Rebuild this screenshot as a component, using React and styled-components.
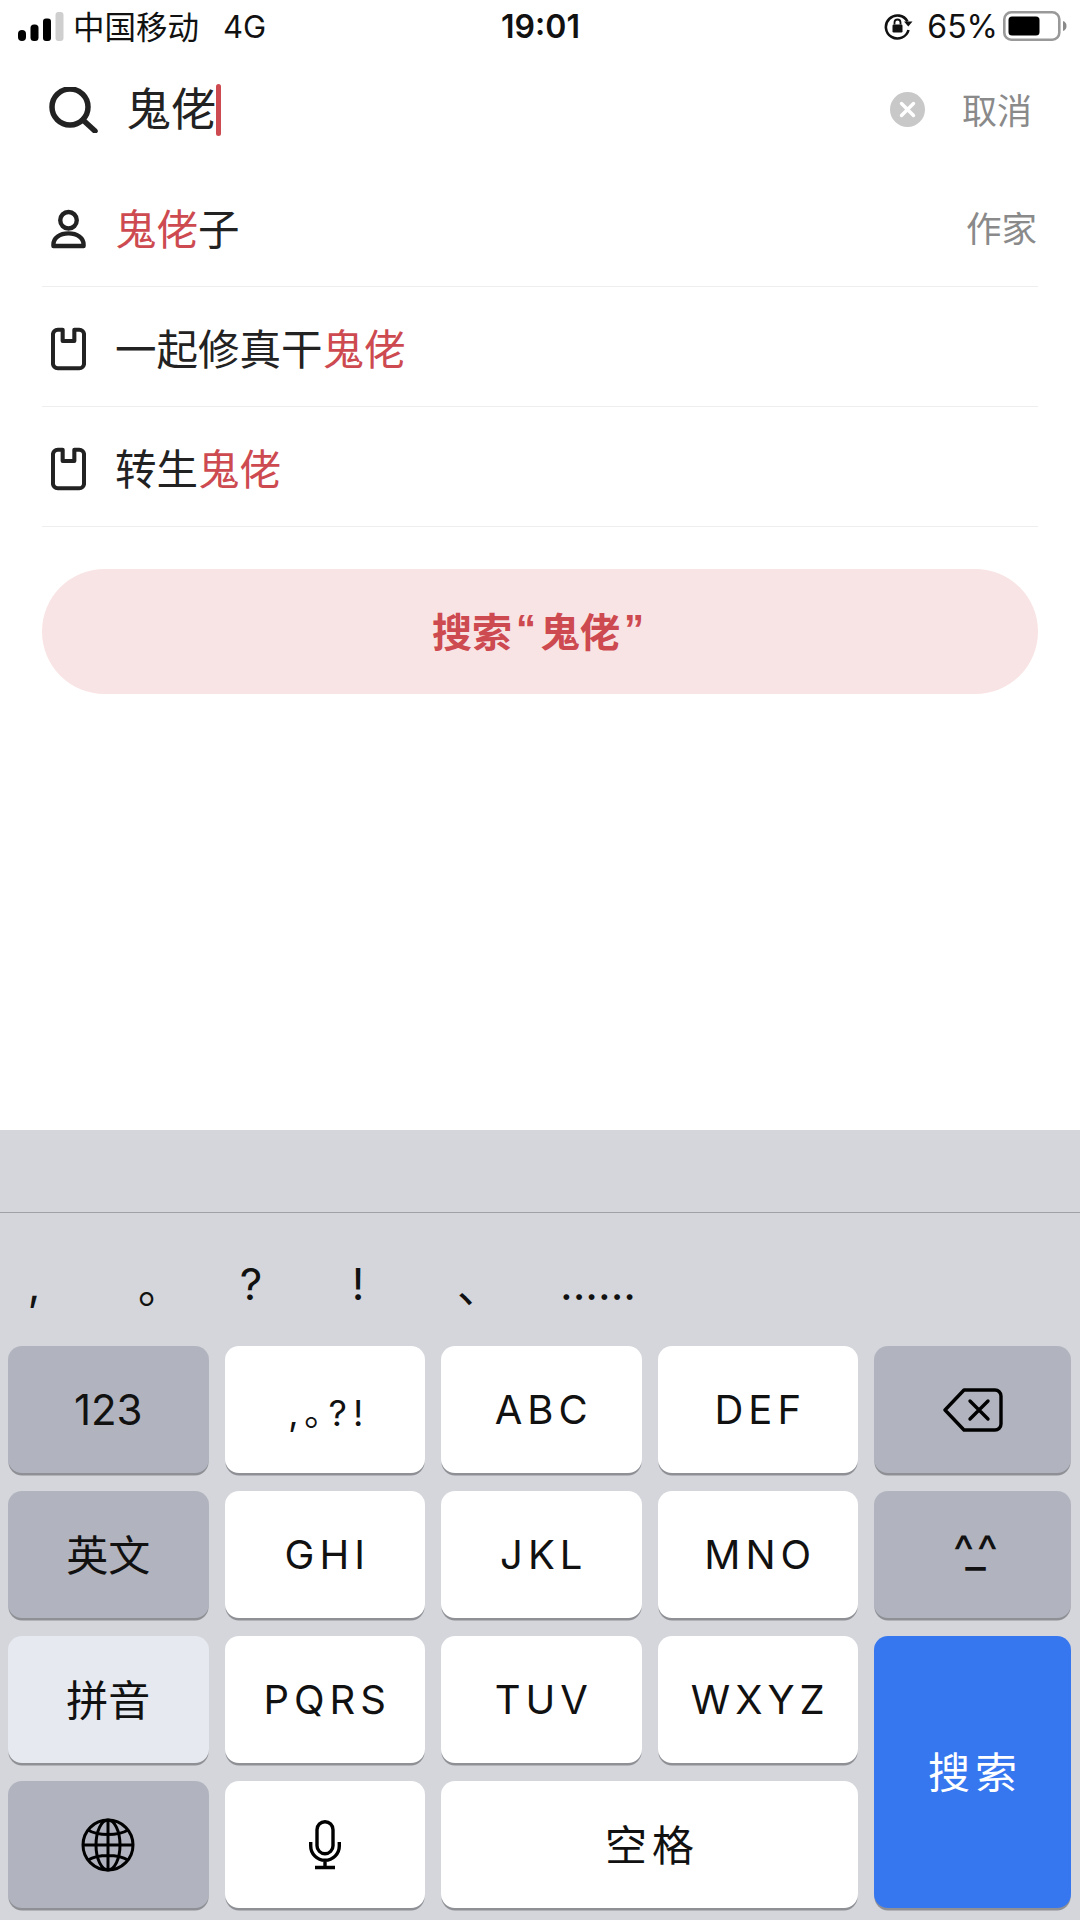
import React from 'react';
import styled, { createGlobalStyle } from 'styled-components';

const RED = '#cd4a50';
const INK = '#222222';

const GlobalStyle = createGlobalStyle`
  html, body {
    margin: 0;
    padding: 0;
    background: #ffffff;
  }
  body {
    font-family: Inter, "Noto Sans CJK SC", sans-serif;
    color: ${INK};
  }
`;

const Screen = styled.div`
  width: 1080px;
  height: 1920px;
  display: flex;
  flex-direction: column;
  overflow: hidden;
`;

const StatusBar = styled.div`
  height: 52px;
  padding: 0 13px 0 18px;
  display: grid;
  grid-template-columns: 1fr auto 1fr;
  align-items: center;
  color: #111111;
  font-size: 30px;
`;

const StatusLeft = styled.div`
  display: flex;
  align-items: center;
`;

const StatusRight = styled.div`
  display: flex;
  align-items: center;
  justify-content: flex-end;
`;

const Carrier = styled.span`
  margin: -3px 0 0 9px;
  font-size: 31.500px;
`;

const Network = styled.span`
  margin-left: 24px;
  font-size: 31px;
`;

const Clock = styled.span`
  margin-left: -4px;
  font-size: 32px;
  font-weight: 600;
`;

const Percent = styled.span`
  margin: 0 5px 0 14px;
  font-size: 32px;
`;

const SearchRow = styled.div`
  height: 115px;
  padding: 0 48px 0 49px;
  display: flex;
  align-items: center;
`;

const Query = styled.div`
  margin-left: 28px;
  font-size: 45px;
  line-height: 52px;
  display: flex;
  align-items: center;
`;

const Caret = styled.span`
  width: 5px;
  height: 52px;
  border-radius: 3px;
  background: ${RED};
`;

const ClearButton = styled.span`
  margin-left: auto;
  width: 35px;
  height: 35px;
  border-radius: 50%;
  background: #c8c8c8;
  display: flex;
  align-items: center;
  justify-content: center;
`;

const CancelLabel = styled.span`
  margin: 0 0 2px 37px;
  font-size: 35px;
  color: #8a8a8a;
`;

const Results = styled.div`
  padding: 0 42px;
`;

const ResultRow = styled.div`
  height: 120px;
  padding: 4px 1px 0 9px;
  box-sizing: border-box;
  border-bottom: 1px solid #eeeeee;
  display: flex;
  align-items: center;
`;

const ResultIcon = styled.span`
  width: 35px;
  display: flex;
  justify-content: center;
`;

const ResultText = styled.span`
  margin: 0 0 4px 29px;
  font-size: 41.500px;
`;

const Hit = styled.span`
  color: ${RED};
`;

const ResultKind = styled.span`
  margin: 0 0 4px auto;
  font-size: 35.500px;
  color: #8a8a8a;
`;

const SearchAll = styled.div`
  margin: 42px 42px 0;
  height: 125px;
  padding-bottom: 4px;
  box-sizing: border-box;
  border-radius: 63px;
  background: #f9e4e5;
  color: ${RED};
  font-size: 40px;
  font-weight: 700;
  display: flex;
  align-items: center;
  justify-content: center;
`;

const Quote = styled.span`
  font-family: "Liberation Sans", sans-serif;
  font-weight: 700;
  padding: 0 4px;
`;

const Keyboard = styled.div`
  margin-top: auto;
  height: 790px;
  background: #d4d6db;
  display: flex;
  flex-direction: column;
`;

const Toolbar = styled.div`
  height: 82px;
  flex: none;
  border-bottom: 1px solid #a0a1a5;
`;

const Candidates = styled.div`
  height: 133px;
  flex: none;
  padding: 8px 0 0 3px;
  box-sizing: border-box;
  display: flex;
  gap: 39px;
  align-items: center;
  color: #111111;
  font-size: 44px;
`;

const Candidate = styled.span`
  width: ${p => (p.$wide ? '120px' : '68px')};
  box-sizing: border-box;
  padding-left: ${p => p.$inset || 0}px;
  padding-right: ${p => p.$outset || 0}px;
  text-align: center;
  margin-right: ${p => (p.$wide ? '-39px' : '0')};
`;

const Keys = styled.div`
  padding: 0 9px 0 8px;
  display: grid;
  grid-template-columns: repeat(4, 200.500px) 1fr;
  grid-auto-rows: 127px;
  column-gap: 16px;
  row-gap: 18px;
`;

const KEY_COLORS = {
  light: '#ffffff',
  dark: '#b1b4be',
  soft: '#e6e9ef',
  primary: '#3677f0'
};

const KEY_FONT_SIZES = {
  letters: 40,
  cjk: 42,
  digits: 42
};

const Key = styled.div`
  background: ${p => KEY_COLORS[p.$tone || 'light']};
  color: ${p => (p.$tone === 'primary' ? '#ffffff' : '#111111')};
  border-radius: 14px;
  box-shadow: 0 3px 0 -0.500px #8e9096;
  font-size: ${p => KEY_FONT_SIZES[p.$kind] || 40}px;
  letter-spacing: ${p => (p.$spaced ? '5px' : '0')};
  padding-left: ${p => (p.$spaced ? '5px' : '0')};
  padding-bottom: ${p => (p.$kind === 'cjk' ? '5px' : '0')};
  box-sizing: border-box;
  display: flex;
  align-items: center;
  justify-content: center;
  grid-column: ${p => p.$col || 'auto'};
  grid-row: ${p => p.$row || 'auto'};
`;

const Punct = styled.span`
  font-size: 36px;
  letter-spacing: 6px;
  padding-left: 8px;
`;

const Emote = styled.span`
  font-size: 45px;
  letter-spacing: -6px;
  margin-top: -8px;
`;

function SignalBars() {
  return (
    <svg width="46" height="29" viewBox="0 0 46 29">
      <rect x="0" y="18" width="8" height="11" rx="4" fill="#000" />
      <rect x="12.500" y="12.500" width="8" height="16.500" rx="3.500" fill="#000" />
      <rect x="25" y="6.500" width="8" height="22.500" rx="3" fill="#000" />
      <rect x="37.500" y="0" width="8" height="29" rx="3" fill="#cfcfcf" />
    </svg>
  );
}

function RotationLock() {
  return (
    <svg width="29" height="28" viewBox="0 0 29 28" fill="none">
      <path d="M23.500 9.500A11.500 11.500 0 1 0 24.500 18" stroke="#111" strokeWidth="2.600" />
      <path d="M20 9.500h8.500l-4.200 5z" fill="#111" />
      <rect x="8.500" y="12.500" width="10" height="8" rx="1.200" fill="#111" />
      <path d="M10.500 12.500v-2a3 3 0 0 1 6 0v2" stroke="#111" strokeWidth="1.800" />
    </svg>
  );
}

function Battery() {
  return (
    <svg width="64" height="30" viewBox="0 0 64 30" fill="none">
      <rect x="1.300" y="1.300" width="55" height="27.400" rx="7" stroke="#999999" strokeWidth="2.600" />
      <rect x="5.500" y="5.500" width="31" height="19" rx="3.500" fill="#000" />
      <path d="M60 10c2.500 .8 3.500 2.700 3.500 5s-1 4.200-3.500 5z" fill="#8a8a8a" />
    </svg>
  );
}

function SearchIcon() {
  return (
    <svg width="49" height="46" viewBox="0 0 49 46" fill="none" stroke="#222" strokeWidth="5.500" strokeLinecap="round">
      <circle cx="21" cy="20" r="18" />
      <path d="M34 33l12 11" />
    </svg>
  );
}

function ClearIcon() {
  return (
    <svg width="17" height="17" viewBox="0 0 17 17" stroke="#fff" strokeWidth="3.400" strokeLinecap="round">
      <path d="M2.500 2.500l12 12M14.500 2.500l-12 12" />
    </svg>
  );
}

function PersonIcon() {
  return (
    <svg width="36" height="40" viewBox="0 0 36 40" fill="none" stroke="#222" strokeWidth="4.500" strokeLinejoin="round">
      <circle cx="18" cy="11" r="8.500" />
      <path d="M2.500 37.500v-1.500C2.500 29 9 24.500 18 24.500S33.500 29 33.500 36v1.500z" />
    </svg>
  );
}

function BookIcon() {
  return (
    <svg width="36" height="44" viewBox="0 0 36 44" fill="none" stroke="#222" strokeWidth="4.200" strokeLinejoin="round">
      <path d="M12 2.200v11.500h12V2.200h5a5 5 0 0 1 5 5v29.600a5 5 0 0 1-5 5H7a5 5 0 0 1-5-5V7.200a5 5 0 0 1 5-5z" />
    </svg>
  );
}

function BackspaceIcon() {
  return (
    <svg width="60" height="44" viewBox="0 0 60 44" fill="none" stroke="#000" strokeWidth="3.400" strokeLinejoin="round" strokeLinecap="round">
      <path d="M21 2h31a6 6 0 0 1 6 6v28a6 6 0 0 1-6 6H21L2 22z" />
      <path d="M27 13l18 18M45 13L27 31" />
    </svg>
  );
}

function GlobeIcon() {
  return (
    <svg width="54" height="54" viewBox="0 0 54 54" fill="none" stroke="#000" strokeWidth="3">
      <circle cx="27" cy="27" r="25" />
      <ellipse cx="27" cy="27" rx="12" ry="25" />
      <path d="M27 2v50M2 27h50M7 12c10 6 30 6 40 0M7 42c10-6 30-6 40 0" />
    </svg>
  );
}

function MicIcon() {
  return (
    <svg width="32" height="50" viewBox="0 0 32 50" fill="none" stroke="#000" strokeWidth="3.400">
      <rect x="8" y="1.700" width="16" height="32" rx="8" />
      <path d="M1.700 22v4a14.300 14.300 0 0 0 28.600 0v-4M16 40.500v7M6 47.500h20" />
    </svg>
  );
}

const KEYS = [
  { label: '123', tone: 'dark', kind: 'digits' },
  { label: <Punct>,｡?!</Punct> },
  { label: 'ABC', kind: 'letters', spaced: true },
  { label: 'DEF', kind: 'letters', spaced: true },
  { label: <BackspaceIcon />, tone: 'dark' },

  { label: '英文', tone: 'dark', kind: 'cjk' },
  { label: 'GHI', kind: 'letters', spaced: true },
  { label: 'JKL', kind: 'letters', spaced: true },
  { label: 'MNO', kind: 'letters', spaced: true },
  { label: <Emote>^_^</Emote>, tone: 'dark' },

  { label: '拼音', tone: 'soft', kind: 'cjk' },
  { label: 'PQRS', kind: 'letters', spaced: true },
  { label: 'TUV', kind: 'letters', spaced: true },
  { label: 'WXYZ', kind: 'letters', spaced: true },
  { label: '搜索', tone: 'primary', kind: 'cjk', spaced: true, col: 5, row: '3 / span 2' },

  { label: <GlobeIcon />, tone: 'dark' },
  { label: <MicIcon /> },
  { label: '空格', kind: 'cjk', spaced: true, col: 'span 2' }
];

export default function App() {
  return (
    <>
      <GlobalStyle />
      <Screen>
        <StatusBar>
          <StatusLeft>
            <SignalBars />
            <Carrier>中国移动</Carrier>
            <Network>4G</Network>
          </StatusLeft>
          <Clock>19:01</Clock>
          <StatusRight>
            <RotationLock />
            <Percent>65%</Percent>
            <Battery />
          </StatusRight>
        </StatusBar>

        <SearchRow>
          <SearchIcon />
          <Query>
            鬼佬
            <Caret />
          </Query>
          <ClearButton>
            <ClearIcon />
          </ClearButton>
          <CancelLabel>取消</CancelLabel>
        </SearchRow>

        <Results>
          <ResultRow>
            <ResultIcon>
              <PersonIcon />
            </ResultIcon>
            <ResultText>
              <Hit>鬼佬</Hit>子
            </ResultText>
            <ResultKind>作家</ResultKind>
          </ResultRow>
          <ResultRow>
            <ResultIcon>
              <BookIcon />
            </ResultIcon>
            <ResultText>
              一起修真干<Hit>鬼佬</Hit>
            </ResultText>
          </ResultRow>
          <ResultRow>
            <ResultIcon>
              <BookIcon />
            </ResultIcon>
            <ResultText>
              转生<Hit>鬼佬</Hit>
            </ResultText>
          </ResultRow>
        </Results>

        <SearchAll>
          搜索<Quote>“</Quote>鬼佬<Quote>”</Quote>
        </SearchAll>

        <Keyboard>
          <Toolbar />
          <Candidates>
            <Candidate $outset={6}>,</Candidate>
            <Candidate $inset={28}>。</Candidate>
            <Candidate>?</Candidate>
            <Candidate>!</Candidate>
            <Candidate $inset={26}>、</Candidate>
            <Candidate $wide>......</Candidate>
          </Candidates>
          <Keys>
            {KEYS.map((key, i) => (
              <Key
                key={i}
                $tone={key.tone}
                $kind={key.kind}
                $spaced={key.spaced}
                $col={key.col}
                $row={key.row}
              >
                {key.label}
              </Key>
            ))}
          </Keys>
        </Keyboard>
      </Screen>
    </>
  );
}
